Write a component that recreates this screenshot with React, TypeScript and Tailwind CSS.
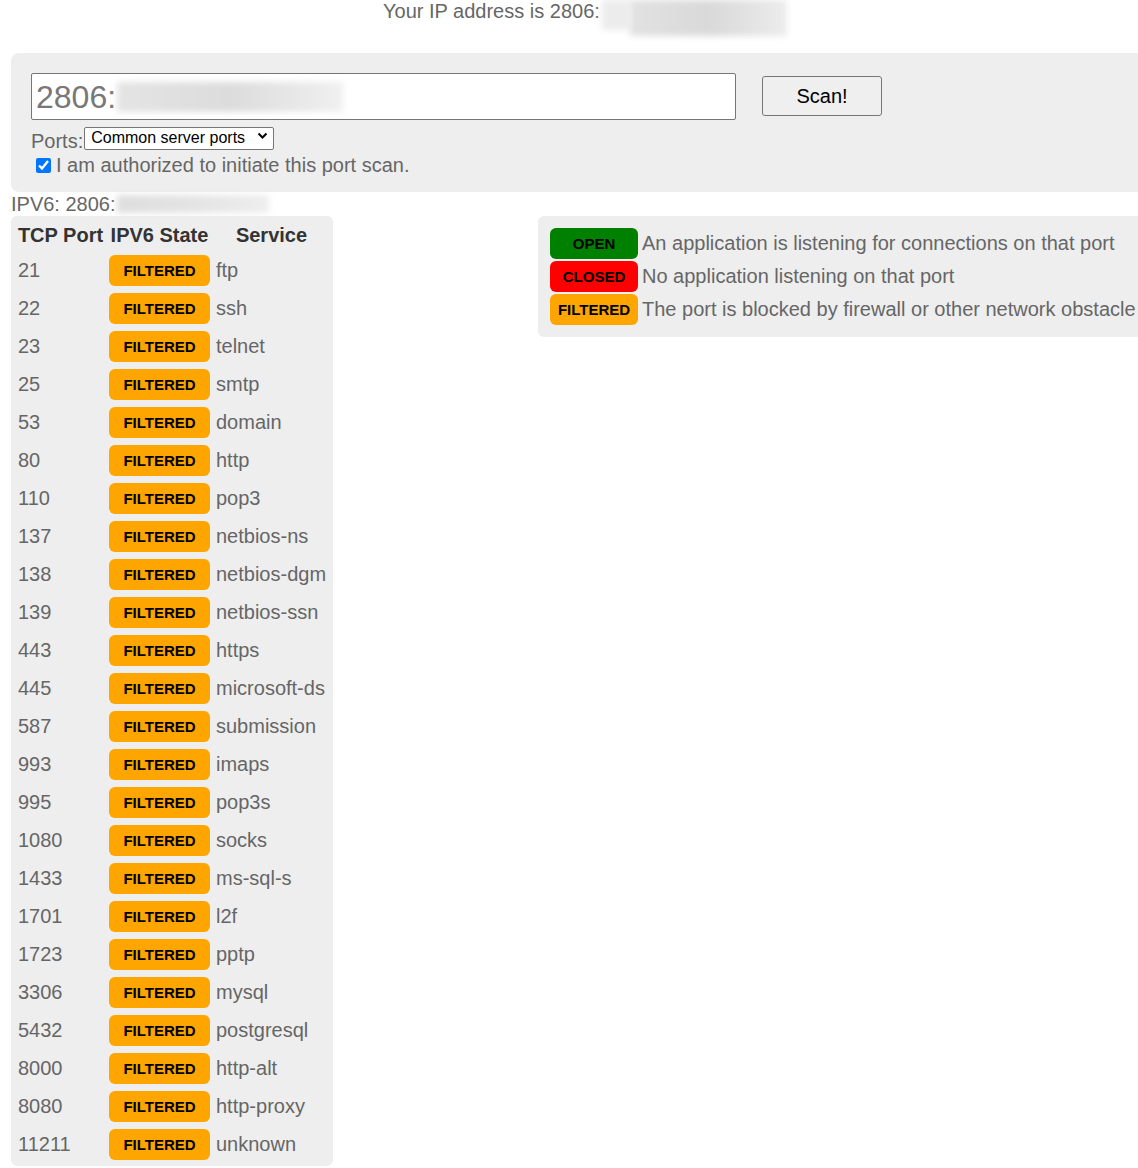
import React from 'react';

const PORTS: [string, string][] = [
  ['21', 'ftp'],
  ['22', 'ssh'],
  ['23', 'telnet'],
  ['25', 'smtp'],
  ['53', 'domain'],
  ['80', 'http'],
  ['110', 'pop3'],
  ['137', 'netbios-ns'],
  ['138', 'netbios-dgm'],
  ['139', 'netbios-ssn'],
  ['443', 'https'],
  ['445', 'microsoft-ds'],
  ['587', 'submission'],
  ['993', 'imaps'],
  ['995', 'pop3s'],
  ['1080', 'socks'],
  ['1433', 'ms-sql-s'],
  ['1701', 'l2f'],
  ['1723', 'pptp'],
  ['3306', 'mysql'],
  ['5432', 'postgresql'],
  ['8000', 'http-alt'],
  ['8080', 'http-proxy'],
  ['11211', 'unknown'],
];

const LEGEND = [
  { label: 'OPEN', cls: 'bg-[#008000]', text: 'An application is listening for connections on that port' },
  { label: 'CLOSED', cls: 'bg-[#ff0000]', text: 'No application listening on that port' },
  { label: 'FILTERED', cls: 'bg-[#ffa500]', text: 'The port is blocked by firewall or other network obstacle' },
];

// blurred-out address fragment
const Redacted: React.FC<{ className: string }> = ({ className }) => (
  <span className={`inline-block align-middle blur-[3px] ${className}`} aria-hidden="true" />
);

const App: React.FC = () => {
  return (
    <div
      className="w-[1138px] min-h-[1168px] overflow-hidden bg-white text-[20px] leading-[23px] text-[#666]"
      style={{ fontFamily: '"Liberation Sans", Arial, sans-serif' }}
    >
      {/* --- Header line --- */}
      <div className="pl-[383px] h-[36px] flex items-start whitespace-nowrap">
        <span>Your IP address is 2806:</span>
        <Redacted className="ml-[2px] w-[28px] h-[30px] bg-[#ececec]" />
        <Redacted className="w-[157px] h-[36px] bg-gradient-to-r from-[#e2e2e2] via-[#d9d9d9] to-[#ececec]" />
      </div>

      {/* --- Scan form --- */}
      <div className="ml-[11px] mt-[17px] w-[1200px] h-[139px] bg-[#eeeeee] rounded-l-[8px] pt-[20px] pl-[20px]">
        <div className="flex items-start">
          <div className="w-[705px] h-[47px] bg-white border border-[#767676] rounded-[2px] flex items-center pl-[4px] overflow-hidden">
            <span className="text-[32px] leading-[36px] text-[#777]">2806:</span>
            <Redacted className="ml-[1px] w-[226px] h-[30px] bg-gradient-to-r from-[#e4e4e4] via-[#dcdcdc] to-[#f0f0f0]" />
          </div>
          <button className="ml-[26px] mt-[3px] w-[120px] h-[40px] border border-[#767676] rounded-[3px] bg-[#efefef] text-black text-[20px]">
            Scan!
          </button>
        </div>

        <div className="mt-[5px] flex items-start whitespace-nowrap h-[28px]">
          <span className="mt-[5px] leading-[23px]">Ports:</span>
          <div className="relative ml-[1px]">
            <select
              defaultValue="common"
              className="appearance-none w-[190px] h-[23px] border border-[#767676] bg-white text-black text-[16px] leading-[20px] pl-[6px] pr-[20px] rounded-[2px]"
            >
              <option value="common">Common server ports</option>
            </select>
            <svg
              className="absolute right-[6px] top-[7px] pointer-events-none"
              width="11"
              height="8"
              viewBox="0 0 11 8"
              fill="none"
            >
              <path d="M1.5 1.5 L5.5 5.5 L9.5 1.5" stroke="#000" strokeWidth="2" />
            </svg>
          </div>
        </div>

        <label className="mt-[1px] flex items-center whitespace-nowrap">
          <input type="checkbox" defaultChecked className="ml-[5px] w-[15px] h-[15px] accent-[#0075ff]" />
          <span className="ml-[5px]">I am authorized to initiate this port scan.</span>
        </label>
      </div>

      {/* --- Address line --- */}
      <div className="ml-[11px] h-[24px] flex items-center whitespace-nowrap">
        <span>IPV6: 2806:</span>
        <Redacted className="ml-[1px] w-[152px] h-[18px] bg-gradient-to-r from-[#dedede] via-[#e4e4e4] to-[#eeeeee]" />
      </div>

      {/* --- Results + legend --- */}
      <div className="flex items-start">
        <div className="ml-[11px] w-[322px] bg-[#eeeeee] rounded-[6px] pl-[7px] pr-[6px] pt-[6px] pb-[6px]">
          <div className="grid grid-cols-[85px_101px_111px] gap-x-[6px] gap-y-[7px] items-center">
            <div className="h-[26px] flex items-center justify-center font-bold text-[#333] whitespace-nowrap">TCP Port</div>
            <div className="h-[26px] flex items-center justify-center font-bold text-[#333] whitespace-nowrap">IPV6 State</div>
            <div className="h-[26px] flex items-center justify-center font-bold text-[#333] whitespace-nowrap">Service</div>
            {PORTS.map(([port, service]) => (
              <React.Fragment key={port}>
                <div className="whitespace-nowrap">{port}</div>
                <div className="h-[31px] rounded-[6px] bg-[#ffa500] flex items-center justify-center text-black font-bold text-[15px]">
                  FILTERED
                </div>
                <div className="whitespace-nowrap">{service}</div>
              </React.Fragment>
            ))}
          </div>
        </div>

        <div className="ml-[205px] w-[640px] shrink-0 bg-[#eeeeee] rounded-[6px] pt-[12px] pb-[12px] pl-[12px] flex flex-col gap-[2px]">
          {LEGEND.map((l) => (
            <div key={l.label} className="flex items-center whitespace-nowrap">
              <div className={`w-[88px] h-[31px] rounded-[6px] ${l.cls} flex items-center justify-center text-black font-bold text-[15px]`}>
                {l.label}
              </div>
              <span className="ml-[4px]">{l.text}</span>
            </div>
          ))}
        </div>
      </div>
    </div>
  );
};

export default App;
